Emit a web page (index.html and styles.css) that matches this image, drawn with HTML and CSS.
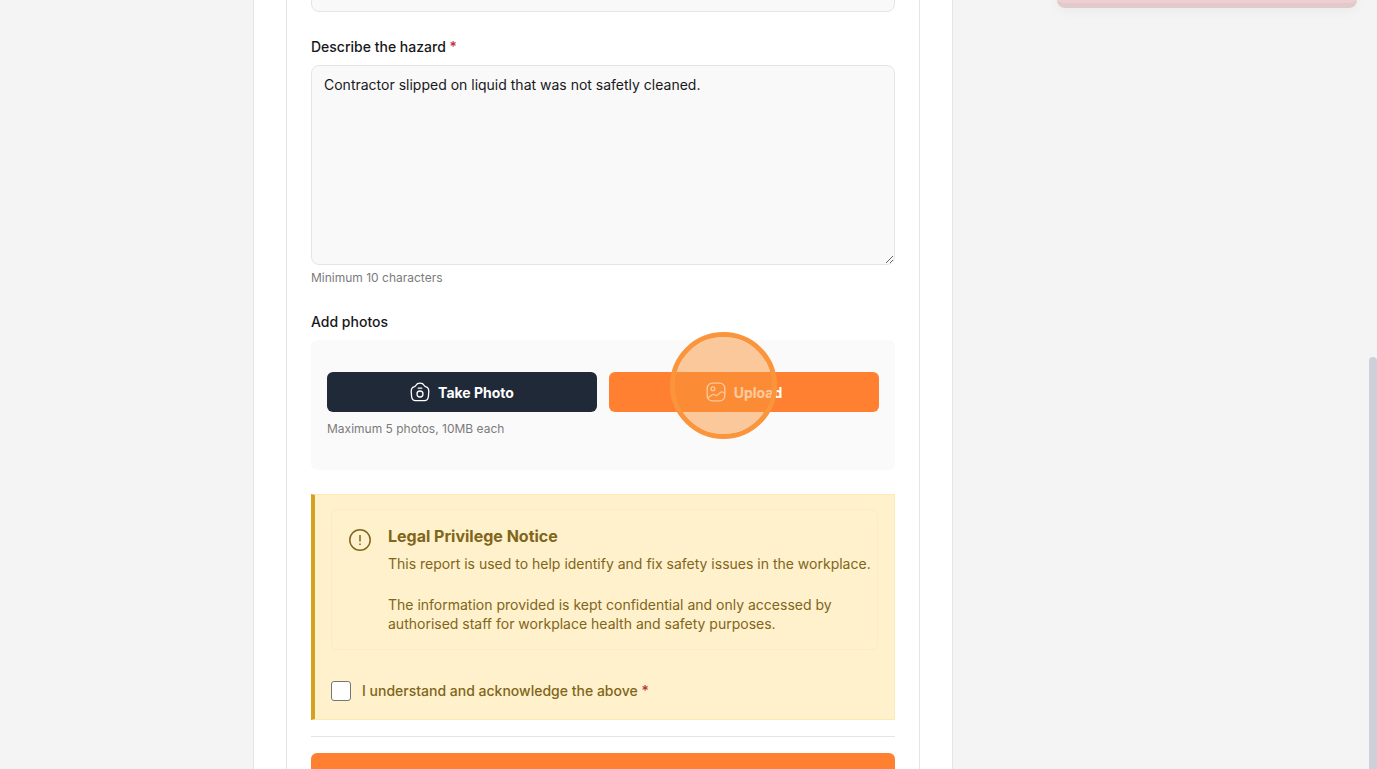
FILE: index.html
```html
<!DOCTYPE html>
<html lang="en">
<head>
    <meta charset="UTF-8">
    <meta name="viewport" content="width=device-width, initial-scale=1">
    <title>Legal Privilege Notice</title>
    <link rel="stylesheet" href="styles.css">
</head>
<body>

<div class="toast"></div>

<main class="page">
    <div class="panel">
        <form class="card">
            <input class="field" type="text" aria-label="Location">

            <div class="group">
                <label class="label" for="hazard">Describe the hazard <span class="required">*</span></label>
                <textarea class="field hazard" id="hazard" required>Contractor slipped on liquid that was not safetly cleaned.</textarea>
                <p class="hint">Minimum 10 characters</p>
            </div>

            <div class="group">
                <h2 class="label">Add photos</h2>
                <div class="photos">
                    <div class="photo-buttons">
                        <button class="btn dark" type="button">
                            <svg class="icon" viewBox="0 0 20 20">
                                <path d="M1.200 9.500C1.200 6.500 2.200 5.200 4 4.800C5 4.600 5.500 4.200 6 3.200C6.800 1.600 7.700 1.200 10 1.200S13.200 1.600 14 3.200C14.500 4.200 15 4.600 16 4.800C17.800 5.200 18.800 6.500 18.800 9.500L18.400 14.500C18 17.700 17 18.600 14.500 18.600H5.500C3 18.600 2 17.700 1.600 14.500Z"/>
                                <circle cx="10" cy="12" r="3"/>
                                <path d="M8.200 6.200H11.800"/>
                            </svg>
                            Take Photo
                        </button>
                        <div class="upload">
                            <button class="btn orange" type="button">
                                <svg class="icon" viewBox="0 0 20 20">
                                    <rect x="1.200" y="1.200" width="17.600" height="17.600" rx="5"/>
                                    <circle cx="7" cy="6.800" r="1.900"/>
                                    <path d="M2 15.700L6.300 12.800C7.200 12.200 8 12.300 8.800 13C9.700 13.800 10.600 13.800 11.500 13L14.800 10.200C15.700 9.500 16.700 9.500 18.600 11.200"/>
                                </svg>
                                Upload
                            </button>
                            <span class="click-ring"></span>
                        </div>
                    </div>
                    <p class="hint">Maximum 5 photos, 10MB each</p>
                </div>
            </div>

            <section class="notice">
                <div class="notice-box">
                    <svg class="notice-icon" viewBox="0 0 24 24">
                        <circle cx="12" cy="12" r="10.200"/>
                        <path d="M12 7V13.500M12 15.500V17"/>
                    </svg>
                    <div>
                        <h3>Legal Privilege Notice</h3>
                        <p>This report is used to help identify and fix safety issues in the workplace.</p>
                        <p>The information provided is kept confidential and only accessed by authorised staff for workplace health and safety purposes.</p>
                    </div>
                </div>
                <div class="acknowledge">
                    <input type="checkbox" id="ack" required>
                    <label for="ack">I understand and acknowledge the above <span class="required">*</span></label>
                </div>
            </section>

            <hr>
            <button class="btn orange submit" type="submit" aria-label="Submit"></button>
        </form>
    </div>
</main>

<div class="scroll-thumb"></div>

</body>
</html>
```

FILE: styles.css
```css
* {
    box-sizing: border-box;
}
html, body {
    height: 100%;
    overflow: hidden;
}
body {
    margin: 0;
    background-color: #f4f4f4;
    font-family: Inter, "Liberation Sans", sans-serif;
    font-size: 14px;
    color: #18181b;
}
h2, h3, p {
    margin: 0;
}
.page {
    display: flow-root;
    padding-right: 171px;
}
.panel {
    max-width: 700px;
    margin: -36px auto 0;
    padding: 0 32px;
    background-color: white;
    border: 1px solid #e5e5e5;
    border-top: none;
}
.card {
    padding: 0 24px 32px;
    border: 1px solid #e5e5e5;
    border-top: none;
}
.group {
    margin-bottom: 24px;
}
.label {
    display: block;
    margin-bottom: 8px;
    font-size: 14px;
    font-weight: 500;
    line-height: 21px;
}
.required {
    color: #c0303c;
}
.field {
    display: block;
    width: 100%;
    height: 48px;
    margin-bottom: 24px;
    padding: 8px 12px;
    background-color: #f9f9f9;
    border: 1px solid #e5e5e5;
    border-radius: 8px;
    font: inherit;
    line-height: 22px;
    color: inherit;
}
.hazard {
    height: 200px;
    margin-bottom: 4px;
    resize: vertical;
}
.hint {
    font-size: 12px;
    line-height: 18px;
    color: #7b7b7b;
}
.photos {
    padding: 32px 16px;
    background-color: #fafafa;
    border-radius: 6px;
}
.photo-buttons {
    display: grid;
    grid-template-columns: 1fr 1fr;
    gap: 12px;
    margin-bottom: 8px;
}
.btn {
    display: flex;
    align-items: center;
    justify-content: center;
    gap: 8px;
    width: 100%;
    height: 40px;
    padding: 0;
    border: none;
    border-radius: 6px;
    font: inherit;
    font-weight: 700;
    color: white;
}
.dark {
    background-color: #1f2937;
}
.orange {
    background-color: #ff8030;
}
.icon {
    width: 20px;
    height: 20px;
    fill: none;
    stroke: currentColor;
    stroke-width: 1.3;
    stroke-linecap: round;
    stroke-linejoin: round;
}
.upload {
    position: relative;
}
/* click highlight over the upload button */
.click-ring {
    position: absolute;
    top: -40px;
    left: 61px;
    width: 107px;
    height: 107px;
    border: 5px solid #fa953c;
    border-radius: 50%;
    background-color: rgba(250, 150, 60, 0.5);
    background-clip: padding-box;
    pointer-events: none;
}
.notice {
    padding: 14px 16px 18px;
    background-color: #fef1cc;
    border: 1px solid #faeab6;
    border-left: 4px solid #d4a21f;
    color: #80651a;
}
.notice-box {
    display: flex;
    gap: 16px;
    padding: 16px 0 16px 16px;
    border: 1px solid #fcecc0;
    border-radius: 6px;
}
.notice-icon {
    flex: none;
    width: 24px;
    height: 24px;
    margin-top: 2px;
    fill: none;
    stroke: currentColor;
    stroke-width: 1.5;
}
.notice h3 {
    margin-bottom: 8px;
    font-size: 16px;
    font-weight: 700;
    line-height: 20px;
}
.notice p {
    line-height: 19px;
}
.notice p + p {
    margin-top: 22px;
}
.acknowledge {
    display: flex;
    align-items: center;
    gap: 11px;
    margin-top: 31px;
    font-weight: 500;
    line-height: 20px;
}
.acknowledge input {
    appearance: none;
    width: 20px;
    height: 20px;
    margin: 0;
    background-color: white;
    border: 1px solid #767676;
    border-radius: 3px;
}
hr {
    height: 1px;
    margin: 16px 0;
    border: none;
    background-color: #e5e5e5;
}
.toast {
    position: fixed;
    top: -56px;
    right: 20px;
    width: 300px;
    height: 64px;
    background-color: #efced1;
    border-bottom: 5px solid #e2c9cc;
    border-radius: 8px;
    box-shadow: 0 4px 12px rgba(0, 0, 0, 0.04);
}
.scroll-thumb {
    position: fixed;
    top: 357px;
    right: 0;
    bottom: -8px;
    width: 8px;
    background-color: #cdd0d8;
    border-radius: 4px;
}
```
